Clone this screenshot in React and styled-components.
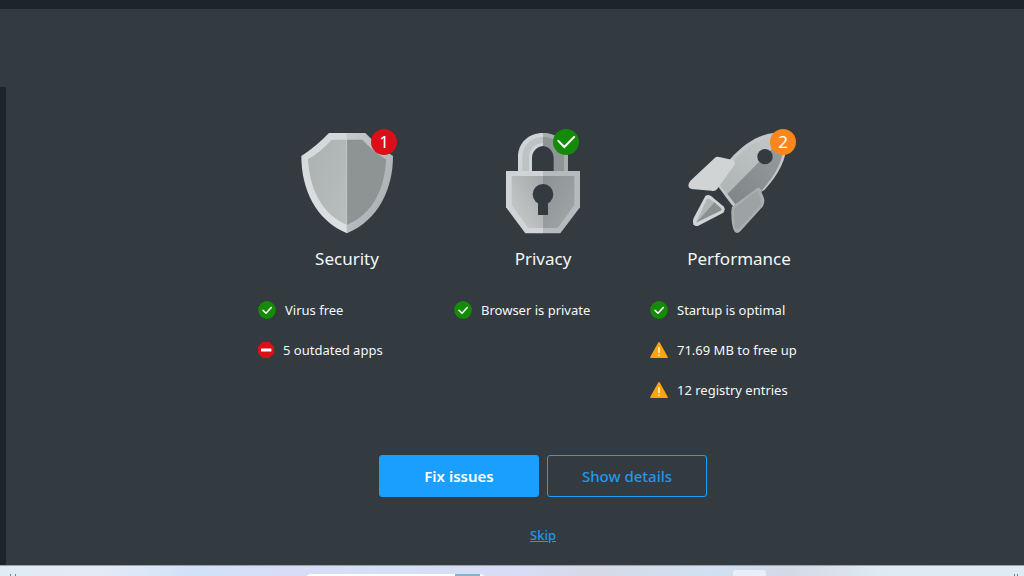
import React from "react";
import styled, { createGlobalStyle } from "styled-components";

const GlobalStyle = createGlobalStyle`
  * { box-sizing: border-box; }
  body {
    margin: 0;
    background: #333a40;
    color: #f5f7f8;
    font-family: "Segoe UI", "Noto Sans", "Open Sans", sans-serif;
  }
`;

const Page = styled.div`
  min-height: 100vh;
  display: flex;
  flex-direction: column;
`;

const TitleBar = styled.header`
  height: 9px;
  background: #1c242c;
`;

const Body = styled.div`
  flex: 1;
  display: flex;
`;

const Rail = styled.aside`
  width: 6px;
  margin-top: 78px;
  background: #1c242c;
`;

const Main = styled.main`
  flex: 1;
  display: flex;
  flex-direction: column;
  align-items: center;
  padding: 111px 0 20px 56px;
`;

const Columns = styled.div`
  display: grid;
  grid-template-columns: repeat(3, 196px);
`;

const Column = styled.section`
  display: flex;
  flex-direction: column;
  align-items: center;
`;

const Picture = styled.div`
  position: relative;
  width: 120px;
  height: 120px;

  svg { display: block; width: 100%; height: 100%; }
`;

const Badge = styled.span`
  position: absolute;
  top: 9px;
  left: ${(p) => p.$left}px;
  width: 26px;
  height: 26px;
  border-radius: 50%;
  background: ${(p) => p.$color};
  color: #fff;
  font-size: 17px;
  line-height: 26px;
  text-align: center;
`;

const Title = styled.h2`
  margin: 7px 0 19px;
  font-size: 17px;
  line-height: 24px;
  font-weight: 400;
`;

const List = styled.ul`
  align-self: stretch;
  margin: 0;
  padding: 0 0 0 9px;
  list-style: none;
`;

const Item = styled.li`
  height: 40px;
  display: flex;
  align-items: center;
  gap: 9px;
  font-size: 13px;
  line-height: 20px;
  white-space: nowrap;

  svg { flex: none; }
`;

const Actions = styled.div`
  display: flex;
  gap: 8px;
  margin-top: 45px;
`;

const Button = styled.button`
  width: 160px;
  height: 42px;
  padding: 0;
  border: 1px solid #1a9fff;
  border-radius: 3px;
  background: ${(p) => (p.$primary ? "#1a9fff" : "transparent")};
  color: ${(p) => (p.$primary ? "#fff" : "#2198ea")};
  font-family: inherit;
  font-size: 15px;
  font-weight: ${(p) => (p.$primary ? 600 : 500)};
  line-height: 20px;
  cursor: pointer;
`;

const Skip = styled.a`
  margin-top: 28px;
  color: #2198ea;
  font-size: 13px;
  line-height: 20px;
  font-weight: 500;
  text-decoration: underline;
`;

const Desktop = styled.footer`
  position: relative;
  height: 11px;
  overflow: hidden;
  border-top: 1px solid #9ba3ad;
  background: linear-gradient(90deg, #e0ebf4 0%, #e4ebf5 10%, #d1e1fa 19%, #d8dcf6 29%, #d4e0f5 36%, #d8dcf6 51%, #d5dae6 58%, #d0e0f3 70%, #d4d9e6 77%, #deebf5 87%, #dfebf4 100%);
`;

const SearchBox = styled.div`
  position: absolute;
  top: 8px;
  left: 305px;
  width: 181px;
  height: 20px;
  border-radius: 6px;
  background: linear-gradient(90deg, #fff 150px, #79b6ca 150px, #79b6ca 175px, #fff 175px);
`;

const ActiveApp = styled.div`
  position: absolute;
  top: 4px;
  right: 258px;
  width: 33px;
  height: 20px;
  border-radius: 3px;
  background: #e8eff9;
`;

const TrayMark = styled.div`
  position: absolute;
  top: 8px;
  left: ${(p) => p.$left};
  width: ${(p) => p.$width}px;
  height: 4px;
  border: solid #718396;
  border-width: 0 1px;
`;

function CheckPath() {
  return <path d="M5 9.2l3 3 5.3-5.7" fill="none" stroke="#fff" strokeWidth="1.5" strokeLinecap="round" strokeLinejoin="round" />;
}

function StatusIcon({ status }) {
  if (status === "ok")
    return (
      <svg width="18" height="18" viewBox="0 0 18 18" aria-hidden="true">
        <circle cx="9" cy="9" r="8.9" fill="#148a08" />
        <CheckPath />
      </svg>
    );
  if (status === "bad")
    return (
      <svg width="16" height="18" viewBox="0 0 16 18" aria-hidden="true">
        <path d="M4.6 1h6.8L16 5.6v6.8L11.4 17H4.6L0 12.4V5.6z" fill="#dc0f18" />
        <rect x="3" y="7.5" width="10.4" height="3" rx=".5" fill="#fff" />
      </svg>
    );
  return (
    <svg width="18" height="18" viewBox="0 0 18 18" aria-hidden="true">
      <path d="M9 1.8L17 16.2H1z" fill="#fca40d" stroke="#fca40d" strokeWidth="1.6" strokeLinejoin="round" />
      <path d="M9 6v6" stroke="#fff3d6" strokeWidth="1.6" />
      <circle cx="9" cy="14.1" r=".9" fill="#fff3d6" />
    </svg>
  );
}

function Shield() {
  return (
    <svg viewBox="-9 0 360 360" aria-hidden="true">
      <defs>
        <linearGradient id="shieldL" x1="0" y1="0" x2="0" y2="1">
          <stop offset="0" stopColor="#d4d8db" />
          <stop offset="1" stopColor="#dde0e2" />
        </linearGradient>
        <linearGradient id="shieldR" x1="0" y1="0" x2="1" y2="1">
          <stop offset="0" stopColor="#c6cacc" />
          <stop offset="1" stopColor="#a5abae" />
        </linearGradient>
        <linearGradient id="shieldIn" x1="0" y1="0" x2="1" y2="1">
          <stop offset="0" stopColor="#aab1b0" />
          <stop offset="1" stopColor="#b9bfbe" />
        </linearGradient>
      </defs>
      <path d="M171 39H117Q80 78 34 108C34 204 75 300 171 340z" fill="url(#shieldL)" />
      <path d="M171 39H226Q263 78 309 108C309 204 267 300 171 340z" fill="url(#shieldR)" />
      <path d="M171 59H125Q94 94 54 118C59 202 91 280 171 315z" fill="url(#shieldIn)" />
      <path d="M171 59H218Q248 94 288 118C285 202 252 280 171 315z" fill="#8e9493" />
      <path d="M170 40V338" stroke="#c9cdcf" strokeWidth="2" />
    </svg>
  );
}

function Lock() {
  return (
    <svg viewBox="-21 0 360 360" aria-hidden="true">
      <defs>
        <linearGradient id="lockL" x1="0" y1="1" x2="1" y2="0">
          <stop offset="0" stopColor="#c9cdce" />
          <stop offset="1" stopColor="#a4a8a9" />
        </linearGradient>
        <linearGradient id="lockR" x1="0" y1="0" x2="1" y2="1">
          <stop offset="0" stopColor="#8d9294" />
          <stop offset="1" stopColor="#a1a6a8" />
        </linearGradient>
      </defs>
      <path d="M84 154V112C84 68 116 39 159 39V78C139 80 126 95 126 115V154z" fill="#d0d4d6" />
      <path d="M97 154V114C97 75 122 51 159 51V69C132 71 117 89 117 114V154z" fill="#bdc2c4" />
      <path d="M159 39C202 39 234 68 234 112V154H191V115C191 95 179 80 159 78z" fill="#8f9597" />
      <path d="M159 39C202 39 234 68 234 112V154H222V112C220 73 195 51 159 51z" fill="#a8adaf" />
      <path d="M48 153H159V340H106L48 262z" fill="#d0d4d6" />
      <path d="M159 153H270V262L211 340H159z" fill="#b5babd" />
      <path d="M65 168H159V324H115L65 256z" fill="url(#lockL)" />
      <path d="M159 168H253V256L203 324H159z" fill="url(#lockR)" />
      <circle cx="159" cy="223" r="31" fill="#333a40" />
      <path d="M144 245h30v40h-30z" fill="#333a40" />
    </svg>
  );
}

function Rocket() {
  return (
    <svg viewBox="-3 0 360 360" aria-hidden="true">
      <defs>
        <linearGradient id="hull" x1="0" y1="1" x2="1" y2="0">
          <stop offset="0" stopColor="#aeb3b3" />
          <stop offset="1" stopColor="#c3c7c7" />
        </linearGradient>
        <linearGradient id="hullShade" x1="0" y1="1" x2="1" y2="0">
          <stop offset="0" stopColor="#7f8586" />
          <stop offset="1" stopColor="#989d9e" />
        </linearGradient>
      </defs>
      <path d="M107 190L148 120C190 72 236 43 285 38Q305 35 320 49C326 105 300 160 253 210L164 260L156 256z" fill="#c3c7c9" />
      <path d="M112 186L158 124C200 77 244 50 312 49L142 222z" fill="url(#hull)" />
      <path d="M142 222L312 49C316 115 288 164 243 214L166 253z" fill="url(#hullShade)" />
      <path d="M105 113Q111 108 121 112L158 120Q170 125 161 139L111 208Q105 215 94 212L34 207Q21 203 27 189Q31 182 37 177z" fill="#d0d4d5" />
      <path d="M156 260L231 205Q239 200 242 210L251 232Q256 244 249 259L181 334Q171 344 163 334Q153 314 154 272z" fill="#a9aeb0" />
      <path d="M161 266L231 212L242 235L241 257L176 326Q168 330 165 320z" fill="#9da3a4" />
      <path d="M76 228Q84 221 94 229L130 259Q138 268 130 278L55 317Q41 321 39 308Q38 300 41 294z" fill="#d0d4d5" />
      <path d="M81 236L48 308L103 247L88 236z" fill="#b0b5b6" />
      <path d="M103 247L48 308L125 271Q126 266 122 263z" fill="#8a9091" />
      <circle cx="255" cy="110" r="23" fill="#333a40" />
    </svg>
  );
}

const COLUMNS = [
  {
    title: "Security",
    Art: Shield,
    badge: { left: 84, color: "#dc0f18", text: "1" },
    items: [["ok", "Virus free"], ["bad", "5 outdated apps"]],
  },
  {
    title: "Privacy",
    Art: Lock,
    badge: { left: 70, color: "#148a08" },
    items: [["ok", "Browser is private"]],
  },
  {
    title: "Performance",
    Art: Rocket,
    badge: { left: 91, color: "#fb861b", text: "2" },
    items: [["ok", "Startup is optimal"], ["warn", "71.69 MB to free up"], ["warn", "12 registry entries"]],
  },
];

export default function App() {
  return (
    <Page>
      <GlobalStyle />
      <TitleBar />
      <Body>
        <Rail />
        <Main>
          <Columns>
            {COLUMNS.map(({ title, Art, badge, items }) => (
              <Column key={title}>
                <Picture>
                  <Art />
                  <Badge $left={badge.left} $color={badge.color}>
                    {badge.text || (
                      <svg viewBox="0 0 27 27" aria-label="OK">
                        <path d="M5.5 12.3l6.3 6.4L22 8.2" fill="none" stroke="#fff" strokeWidth="2.1" strokeLinecap="round" />
                      </svg>
                    )}
                  </Badge>
                </Picture>
                <Title>{title}</Title>
                <List>
                  {items.map(([status, text]) => (
                    <Item key={text}>
                      <StatusIcon status={status} />
                      {text}
                    </Item>
                  ))}
                </List>
              </Column>
            ))}
          </Columns>
          <Actions>
            <Button type="button" $primary>Fix issues</Button>
            <Button type="button">Show details</Button>
          </Actions>
          <Skip href="#skip">Skip</Skip>
        </Main>
      </Body>
      <Desktop>
        <TrayMark $left="1%" $width={6} />
        <SearchBox />
        <ActiveApp />
        <TrayMark $left="99%" $width={4} />
      </Desktop>
    </Page>
  );
}
